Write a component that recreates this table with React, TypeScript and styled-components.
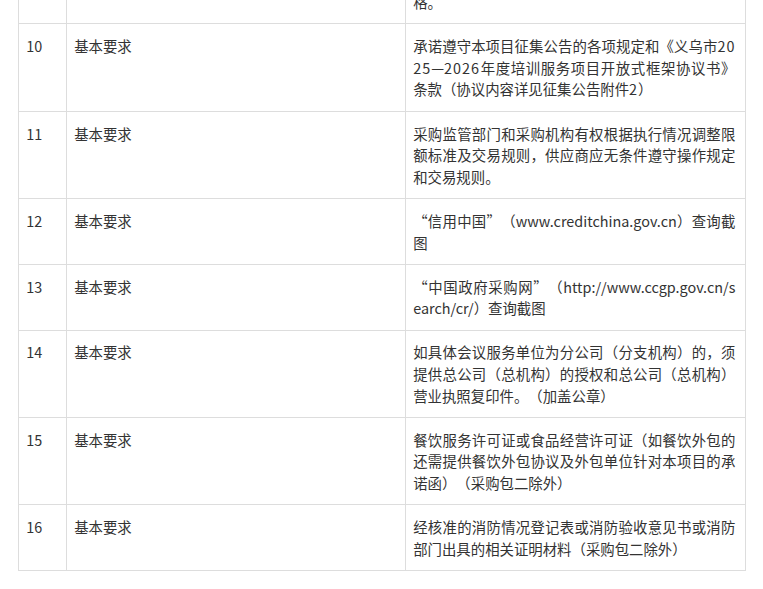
import { Fragment } from 'react';
import styled, { createGlobalStyle } from 'styled-components';

type Row = {
  no: number;
  kind: string;
  content: string;
};

const rows: Row[] = [
  {
    no: 9,
    kind: '基本要求',
    content:
      '供应商须具有独立承担民事责任的能力，具有良好的商业信誉和健全的财务会计制度，符合采购人资格。',
  },
  {
    no: 10,
    kind: '基本要求',
    content:
      '承诺遵守本项目征集公告的各项规定和《义乌市2025—2026年度培训服务项目开放式框架协议书》条款（协议内容详见征集公告附件2）',
  },
  {
    no: 11,
    kind: '基本要求',
    content:
      '采购监管部门和采购机构有权根据执行情况调整限额标准及交易规则，供应商应无条件遵守操作规定和交易规则。',
  },
  {
    no: 12,
    kind: '基本要求',
    content: '“信用中国”（www.creditchina.gov.cn）查询截图',
  },
  {
    no: 13,
    kind: '基本要求',
    content: '“中国政府采购网”（http://www.ccgp.gov.cn/search/cr/）查询截图',
  },
  {
    no: 14,
    kind: '基本要求',
    content:
      '如具体会议服务单位为分公司（分支机构）的，须提供总公司（总机构）的授权和总公司（总机构）营业执照复印件。（加盖公章）',
  },
  {
    no: 15,
    kind: '基本要求',
    content:
      '餐饮服务许可证或食品经营许可证（如餐饮外包的还需提供餐饮外包协议及外包单位针对本项目的承诺函）（采购包二除外）',
  },
  {
    no: 16,
    kind: '基本要求',
    content:
      '经核准的消防情况登记表或消防验收意见书或消防部门出具的相关证明材料（采购包二除外）',
  },
];

// digits are a bit wider in the original face
const digits = /(\d+)/;

function Content({ text }: { text: string }) {
  return (
    <>
      {text.split(digits).map((part, i) =>
        digits.test(part) ? (
          <StyledDigits key={i}>{part}</StyledDigits>
        ) : (
          <Fragment key={i}>{part}</Fragment>
        ),
      )}
    </>
  );
}

export default function App() {
  return (
    <>
      <GlobalStyle />
      <StyledPage>
        <StyledTable>
          <colgroup>
            <StyledCol $width={48} />
            <StyledCol $width={339} />
            <StyledCol $width={340} />
          </colgroup>
          <tbody>
            {rows.map((row) => (
              <tr key={row.no}>
                <StyledCell>{row.no}</StyledCell>
                <StyledCell>{row.kind}</StyledCell>
                <StyledCell $justify>
                  <Content text={row.content} />
                </StyledCell>
              </tr>
            ))}
          </tbody>
        </StyledTable>
      </StyledPage>
    </>
  );
}

const GlobalStyle = createGlobalStyle`
  html, body {
    margin: 0;
    padding: 0;
    background: #fff;
    overflow: hidden;
  }
  body {
    font-family: "Noto Sans CJK SC", "Noto Sans", sans-serif;
    color: #333;
  }
`;

// the page is scrolled: row 9 sits mostly above the top edge
const StyledPage = styled.div`
  padding: 0 18px;
  margin-top: -64px;
`;

const StyledTable = styled.table`
  width: 727px;
  table-layout: fixed;
  border-collapse: collapse;
  font-size: 14.4px;
  line-height: 21.6px;
`;

const StyledCol = styled.col<{ $width: number }>`
  width: ${(p) => p.$width}px;
`;

const StyledCell = styled.td<{ $justify?: boolean }>`
  border: 1px solid #dddddd;
  padding: 10.8px ${(p) => (p.$justify ? '9.6px' : '7.2px')} 10.8px 7.2px;
  vertical-align: top;
  text-align: ${(p) => (p.$justify ? 'justify' : 'left')};
  word-break: break-all;
  text-spacing-trim: space-all;
`;

const StyledDigits = styled.span`
  letter-spacing: 1px;
`;
